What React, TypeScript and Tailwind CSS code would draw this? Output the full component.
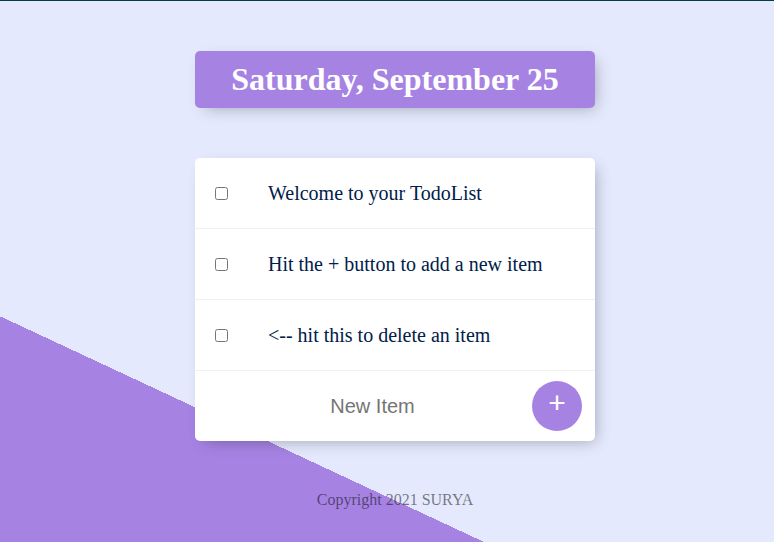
import React from 'react'

const ITEMS = [
  'Welcome to your TodoList',
  'Hit the + button to add a new item',
  '<-- hit this to delete an item',
]

const serif = "font-['Liberation_Serif','Times_New_Roman',serif]"

export default function App() {
  return (
    <div className="relative flex h-[542px] w-full flex-col overflow-hidden bg-[linear-gradient(25deg,#A683E3_25%,#E4E9FD_25%)]">
      <div className="h-px w-full bg-[#073b47]" />

      <div className="flex flex-col pl-[16px]">
        {/* Heading */}
        <div className="mx-auto mt-[50px] w-[400px] rounded-[5px] bg-[#A683E3] shadow-[5px_5px_15px_-5px_rgba(0,0,0,0.3)]">
          <h1 className={`${serif} p-[10px] text-center text-[32px] font-bold leading-[37px] text-white`}>
            Saturday, September 25
          </h1>
        </div>

        {/* List */}
        <div className="mx-auto mt-[50px] w-[400px] rounded-[5px] bg-white shadow-[5px_5px_15px_-5px_rgba(0,0,0,0.3)]">
          {ITEMS.map((text) => (
            <div key={text} className="flex min-h-[70px] items-center border-b border-[#F1F1F1]">
              <input type="checkbox" className="m-[20px] h-[13px] w-[13px]" />
              <p className={`${serif} m-0 p-[20px] text-[20px] font-extralight text-[#00204a]`}>{text}</p>
            </div>
          ))}
          <form className="flex h-[70px] items-center" onSubmit={(e) => e.preventDefault()}>
            <input
              type="text"
              placeholder="New Item"
              className="ml-[21px] h-[60px] w-[313px] border-none bg-transparent text-center font-['Liberation_Sans',Arial,sans-serif] text-[20px] font-extralight text-[#00204a] placeholder:text-[#757575] focus:outline-none"
            />
            <button
              type="submit"
              className="ml-[3px] flex h-[50px] w-[50px] items-center justify-center rounded-full bg-[#A683E3] pb-[6px] font-['Liberation_Sans',Arial,sans-serif] text-[30px] leading-none text-white"
            >
              +
            </button>
          </form>
        </div>

        {/* Footer */}
        <footer className={`${serif} mt-[47px] text-center text-[16px] text-black/50`}>
          Copyright 2021 SURYA
        </footer>
      </div>
    </div>
  )
}
